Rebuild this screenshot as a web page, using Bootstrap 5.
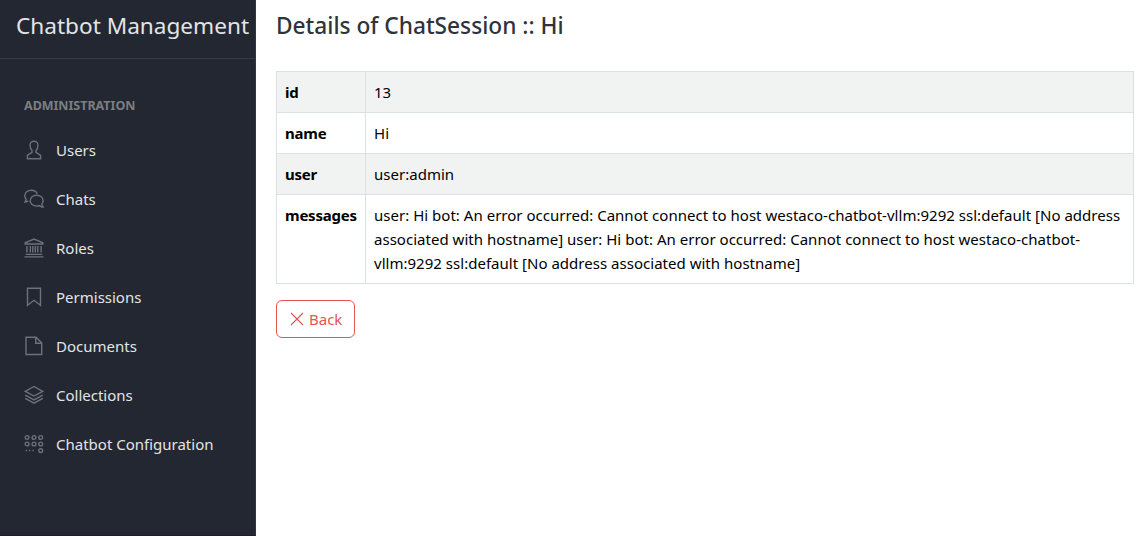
<!DOCTYPE html>
<html lang="en">
<head>
<meta charset="utf-8">
<meta name="viewport" content="width=device-width, initial-scale=1">
<title>Chatbot Management</title>
<link href="https://cdn.jsdelivr.net/npm/bootstrap@5.3.0/dist/css/bootstrap.min.css" rel="stylesheet">
<style>
body { font-family: "Noto Sans", "Open Sans", sans-serif; font-size: 15px; line-height: 24px; color: #000; overflow: hidden; }
.side-panel { width: 256px; background: #232731; border-right: 1px solid #323640; border-bottom: 1px solid #211d27; color: #e3e4e6; }
.side-brand { height: 59px; padding: 8px 0 0 16px; border-bottom: 1px solid #353a46; font-size: 22.6px; line-height: 36px; white-space: nowrap; }
.side-title { padding: 36px 0 9px 24px; font-size: 12.5px; line-height: 21px; font-weight: 700; color: #7c7e82; letter-spacing: -.02px; }
.side-link { height: 49px; padding-left: 24px; color: #e3e4e6; }
.side-link svg { width: 20px; height: 20px; margin-right: 12px; fill: none; stroke: #6d717a; stroke-width: 1.4; }
.page-title { font-size: 22.7px; line-height: 36px; font-weight: 500; color: #2f333d; margin-bottom: 27px; }
.detail-table { --bs-table-border-color: #dbdfe6; --bs-table-striped-bg: #f1f3f2; --bs-table-striped-color: #000; --bs-table-color: #000; }
.detail-table th { width: 89px; letter-spacing: -.24px; }
.detail-table td { letter-spacing: .02px; }
.btn-back { --bs-btn-color: #e55353; --bs-btn-border-color: #e55353; --bs-btn-font-size: 15px; height: 38px; }
.btn-back svg { fill: none; stroke: #e55353; stroke-width: 1.1; }
.content-area { padding: 8px 13px 0 20px; }
</style>
</head>
<body>
<div class="d-flex vh-100">
  <nav class="side-panel flex-shrink-0">
    <div class="side-brand">Chatbot Management</div>
    <div class="side-title">ADMINISTRATION</div>
    <a href="#" class="side-link d-flex align-items-center text-decoration-none">
      <svg viewBox="0 0 20 20"><path d="M10 1.200c-2.600 0-4 1.800-3.900 4.200 0 2 .6 3.800 1.900 5v2L4 14.800q-.6.4-.6 1v3h13.200v-3q0-.6-.6-1l-4-2.400v-2c1.300-1.200 1.900-3 1.900-5 .1-2.400-1.300-4.200-3.900-4.200z"/></svg><span>Users</span></a>
    <a href="#" class="side-link d-flex align-items-center text-decoration-none">
      <svg viewBox="0 0 20 20"><path d="M13.300 4.700C12.300 2.500 10 1.200 7.300 1.200 3.600 1.200.8 3.600.8 6.700c0 1.300.5 2.500 1.300 3.500 0 1-.4 1.900-1.200 2.800 1.200 0 2.300-.4 3.300-1.100M12.600 6.200c-3.600 0-6.400 2.400-6.400 5.500s2.800 5.400 6.400 5.400q1.400 0 2.700-.5c1.200.9 2.500 1.500 4 1.500-.9-1-1.400-2.100-1.400-3.200.8-.9 1.200-2 1.200-3.200 0-3.100-2.900-5.500-6.500-5.500z"/></svg><span>Chats</span></a>
    <a href="#" class="side-link d-flex align-items-center text-decoration-none">
      <svg viewBox="0 0 20 20"><path d="M1.200 6V4.800L10 1.100l8.800 3.700V6zM2.900 8v6.500M6.300 8v6.500M8.800 8v6.500M11.300 8v6.500M13.800 8v6.500M17.100 8v6.500M1.800 16.400h16.400M.5 18.900h19"/></svg><span>Roles</span></a>
    <a href="#" class="side-link d-flex align-items-center text-decoration-none">
      <svg viewBox="0 0 20 20"><path d="M3.500 1.200h13v17.200L10 13.300l-6.500 5.100z"/></svg><span>Permissions</span></a>
    <a href="#" class="side-link d-flex align-items-center text-decoration-none">
      <svg viewBox="0 0 20 20"><path d="M2 1.200h10.100l5.600 5.700v11.600H2zM11.700 1.200v6h6"/></svg><span>Documents</span></a>
    <a href="#" class="side-link d-flex align-items-center text-decoration-none">
      <svg viewBox="0 0 20 20"><path d="M10 1.500L1.300 6.300 10 11l8.700-4.700zM1.200 10.200l8.800 4.700 8.800-4.700M1.200 13.400l8.800 4.700 8.800-4.700"/></svg><span>Collections</span></a>
    <a href="#" class="side-link d-flex align-items-center text-decoration-none">
      <svg viewBox="0 0 20 20"><circle cx="3.100" cy="3.500" r="1.900"/><circle cx="10" cy="3.500" r="1.900"/><circle cx="16.700" cy="3.500" r="1.900"/><circle cx="3.100" cy="10" r="1.900"/><circle cx="10" cy="10" r="1.900"/><circle cx="16.700" cy="10" r="1.900"/><circle cx="16.700" cy="16.600" r="1.900"/><path d="M1.800 16.500h1.300M5 16.500h1.300M8.500 16.500h1.300"/></svg><span>Chatbot Configuration</span></a>
  </nav>
  <main class="content-area flex-grow-1">
    <h1 class="page-title">Details of ChatSession :: Hi</h1>
    <table class="detail-table table table-bordered table-striped mb-3">
      <tbody>
        <tr><th>id</th><td>13</td></tr>
        <tr><th>name</th><td>Hi</td></tr>
        <tr><th>user</th><td>user:admin</td></tr>
        <tr><th>messages</th><td>user: Hi bot: An error occurred: Cannot connect to host westaco-chatbot-vllm:9292 ssl:default [No address associated with hostname] user: Hi bot: An error occurred: Cannot connect to host westaco-chatbot-vllm:9292 ssl:default [No address associated with hostname]</td></tr>
      </tbody>
    </table>
    <a href="#" class="btn btn-outline-danger btn-back d-inline-flex align-items-center gap-1"><svg width="16" height="16" viewBox="0 0 16 16"><path d="M2 2l12 12M14 2L2 14"/></svg><span>Back</span></a>
  </main>
</div>
<script src="https://cdn.jsdelivr.net/npm/bootstrap@5.3.0/dist/js/bootstrap.bundle.min.js"></script>
</body>
</html>
